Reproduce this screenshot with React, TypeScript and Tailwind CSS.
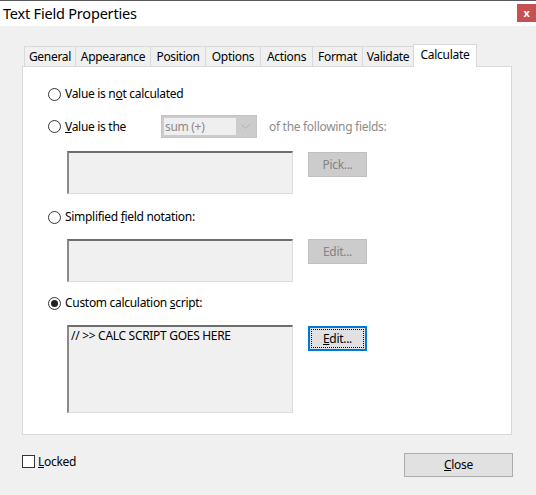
import React from 'react';

const FONT = { fontFamily: '"Segoe UI", "Noto Sans", sans-serif' };

const TABS = [
  { label: 'General', w: 'w-[51px]' },
  { label: 'Appearance', w: 'w-[75px]' },
  { label: 'Position', w: 'w-[55px]' },
  { label: 'Options', w: 'w-[55px]' },
  { label: 'Actions', w: 'w-[52px]' },
  { label: 'Format', w: 'w-[50px]' },
  { label: 'Validate', w: 'w-[51px]' },
];

function Radio({ checked = false }: { checked?: boolean }) {
  return (
    <span className="w-[13px] h-[13px] rounded-full border border-[#333333] bg-white flex items-center justify-center shrink-0">
      {checked && <span className="w-[7px] h-[7px] rounded-full bg-[#222222]" />}
    </span>
  );
}

function ListBox({ tall = false, children }: { tall?: boolean; children?: React.ReactNode }) {
  return (
    <div
      className={`w-[226px] ${tall ? 'h-[88px]' : 'h-[43px]'} bg-[#f0f0f0] border-t-2 border-l-2 border-r border-b border-t-[#6e6e6e] border-l-[#8a8a8a] border-r-[#dcdcdc] border-b-[#dcdcdc] pl-[1px] pt-[1px] text-[12px] leading-[16px] text-black`}
    >
      {children}
    </div>
  );
}

function DisabledButton({ label }: { label: string }) {
  return (
    <div className="w-[59px] h-[25px] ml-[15px] bg-[#cccccc] border border-[#bfbfbf] flex items-center justify-center text-[12px] text-[#838383]">
      {label}
    </div>
  );
}

export default function App() {
  return (
    <div className="w-[536px] h-[495px] bg-[#f0f0f0] flex flex-col overflow-hidden tracking-[-0.3px]" style={FONT}>
      {/* Title bar */}
      <div className="h-[26px] bg-white border-t border-[#5a5a5a] flex items-start justify-between shrink-0">
        <span className="pl-[3px] pt-[2px] text-[14.5px] leading-[20px] tracking-[-0.2px] text-black">Text Field Properties</span>
        <div className="mt-[3px] w-[19px] h-[18px] bg-[#c75050] flex items-center justify-center text-white text-[11px] font-bold leading-none pb-[2px]">
          x
        </div>
      </div>

      {/* Tabs */}
      <div className="flex items-end h-[40px] pl-[24px] shrink-0">
        {TABS.map((t) => (
          <div
            key={t.label}
            className={`${t.w} h-[20px] border-t border-l border-[#d9d9d9] flex items-center justify-center text-[12px] text-black bg-[#f0f0f0]`}
          >
            {t.label}
          </div>
        ))}
        <div className="w-[64px] h-[23px] -mb-[1px] relative z-10 bg-white border-t border-l border-r border-[#d9d9d9] flex items-start justify-center pt-[2px] text-[12px] leading-[16px] text-black">
          Calculate
        </div>
      </div>

      {/* Panel */}
      <div className="ml-[22px] w-[490px] h-[369px] bg-white border border-[#d9d9d9] flex flex-col pl-[25px] shrink-0">
        <div className="mt-[19px] h-[16px] flex items-center text-[12px] text-black">
          <Radio />
          <span className="ml-[4px]">
            Value is n<u>o</u>t calculated
          </span>
        </div>

        <div className="mt-[13px] h-[23px] flex items-center text-[12px] text-black">
          <Radio />
          <span className="ml-[4px] w-[96px]">
            <u>V</u>alue is the
          </span>
          <div className="w-[96px] h-[23px] bg-[#cccccc] border border-[#c4c4c4] flex p-[2px]">
            <div className="flex-1 bg-[#efefef] text-[#8a8a8a] flex items-center pl-[1px]">sum (+)</div>
            <div className="w-[18px] flex items-center justify-center">
              <svg width="9" height="6" viewBox="0 0 9 6" fill="none">
                <path d="M0.5 0.5L4.5 4.5L8.5 0.5" stroke="#b0b0b0" strokeWidth="1" />
              </svg>
            </div>
          </div>
          <span className="ml-[12px] text-[#8c8c8c]">of the following fields:</span>
        </div>

        <div className="mt-[13px] flex items-start pl-[19px]">
          <ListBox />
          <div className="mt-[1px]">
            <DisabledButton label="Pick..." />
          </div>
        </div>

        <div className="mt-[15px] h-[16px] flex items-center text-[12px] text-black">
          <Radio />
          <span className="ml-[4px]">
            Simplified <u>f</u>ield notation:
          </span>
        </div>

        <div className="mt-[14px] flex items-start pl-[19px]">
          <ListBox />
          <DisabledButton label="Edit..." />
        </div>

        <div className="mt-[13px] h-[16px] flex items-center text-[12px] text-black">
          <Radio checked />
          <span className="ml-[4px]">
            Custom calculation <u>s</u>cript:
          </span>
        </div>

        <div className="mt-[14px] flex items-start pl-[19px]">
          <ListBox tall>
            <span className="pl-[1px]">// &gt;&gt; CALC SCRIPT GOES HERE</span>
          </ListBox>
          <div className="ml-[15px] mt-[1px] w-[59px] h-[25px] bg-[#e1e1e1] border-2 border-[#0078d7] p-[1px]">
            <div className="w-full h-full border border-dotted border-black flex items-center justify-center text-[12px] text-black">
              <span>
                <u>E</u>dit...
              </span>
            </div>
          </div>
        </div>
      </div>

      {/* Footer */}
      <div className="flex items-start justify-between pl-[22px] pr-[23px] mt-[18px]">
        <div className="flex items-center mt-[2px] h-[13px]">
          <span className="w-[13px] h-[13px] border border-[#333333] bg-white" />
          <span className="ml-[3px] text-[12px] text-black">
            <u>L</u>ocked
          </span>
        </div>
        <div className="w-[109px] h-[24px] bg-[#e1e1e1] border border-[#adadad] flex items-center justify-center text-[12px] text-black">
          <span>
            <u>C</u>lose
          </span>
        </div>
      </div>
    </div>
  );
}
